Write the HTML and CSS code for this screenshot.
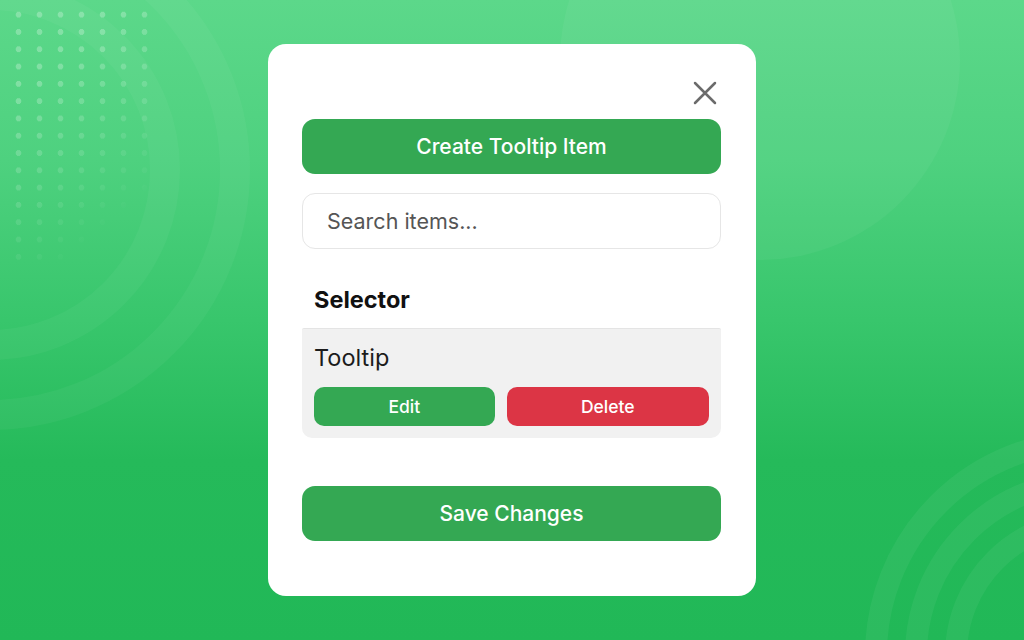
FILE: index.html
```html
<!DOCTYPE html>
<html lang="en">
<head>
<meta charset="utf-8">
<title>Tooltip Items</title>
<link rel="stylesheet" href="styles.css">
</head>
<body>
<div class="bg">
  <div class="dots"></div>
  <div class="ring-set left">
    <span class="ring r1"></span>
    <span class="ring r2"></span>
  </div>
  <div class="blob"></div>
  <div class="ring-set right">
    <span class="ring r3"></span>
    <span class="ring r4"></span>
    <span class="ring r5"></span>
  </div>
</div>
<main class="stage">
  <section class="modal">
    <div class="modal-head">
      <button class="close" aria-label="Close">
        <svg width="24" height="24" viewBox="0 0 24 24" fill="none" stroke="#6b6b6b" stroke-width="2.5" stroke-linecap="round">
          <path d="M2 2 L22 22 M22 2 L2 22"/>
        </svg>
      </button>
    </div>
    <button class="btn btn-primary btn-lg">Create Tooltip Item</button>
    <div class="search">Search items...</div>
    <h2 class="group-title">Selector</h2>
    <div class="item">
      <div class="item-name">Tooltip</div>
      <div class="item-actions">
        <button class="btn btn-primary btn-sm">Edit</button>
        <button class="btn btn-danger btn-sm">Delete</button>
      </div>
    </div>
    <button class="btn btn-primary btn-lg save">Save Changes</button>
  </section>
</main>
</body>
</html>
```
FILE: styles.css
```css
* { box-sizing: border-box; }
html, body { margin: 0; height: 100%; }
body {
  width: 1024px;
  height: 640px;
  overflow: hidden;
  font-family: Inter, "Liberation Sans", sans-serif;
  background: linear-gradient(180deg, #5cd88a 0%, #4ed17f 25%, #38c66c 50%, #25ba5a 72%, #21b857 100%);
  position: relative;
}
.bg { position: absolute; inset: 0; overflow: hidden; }
.dots {
  position: absolute;
  left: 8px; top: 6px;
  width: 150px; height: 265px;
  background-image: radial-gradient(circle, rgba(255,255,255,0.26) 2.6px, transparent 3.2px);
  background-size: 21px 17.3px;
  -webkit-mask-image: linear-gradient(140deg, #000 25%, transparent 80%);
  mask-image: linear-gradient(140deg, #000 25%, transparent 80%);
}
.ring-set { position: absolute; width: 0; height: 0; }
.ring-set.left { left: -10px; top: 170px; }
.ring-set.right { left: 1090px; top: 655px; }
.ring {
  position: absolute;
  border-radius: 50%;
  border: 22px solid rgba(255,255,255,0.05);
  transform: translate(-50%, -50%);
}
.r1 { width: 380px; height: 380px; border-width: 30px; border-color: rgba(255,255,255,0.04); }
.r2 { width: 520px; height: 520px; border-width: 30px; border-color: rgba(255,255,255,0.04); }
.r3 { width: 450px; height: 450px; }
.r4 { width: 370px; height: 370px; }
.r5 { width: 290px; height: 290px; }
.blob {
  position: absolute;
  left: 560px; top: -140px;
  width: 400px; height: 400px;
  border-radius: 50%;
  background: rgba(255,255,255,0.045);
}
.stage {
  position: relative;
  display: flex;
  justify-content: center;
  padding-top: 44px;
}
.modal {
  width: 488px;
  background: #fff;
  border-radius: 18px;
  padding: 37px 35px 55px 34px;
  display: flex;
  flex-direction: column;
}
.modal-head {
  display: flex;
  justify-content: flex-end;
  height: 24px;
  margin-bottom: 14px;
  padding-right: 4px;
}
.close {
  border: 0; background: none; padding: 0; margin: 0;
  width: 24px; height: 24px; display: block;
}
.close svg { display: block; }
.btn {
  border: 0;
  font-family: inherit;
  color: #fff;
  cursor: pointer;
  display: flex;
  align-items: center;
  justify-content: center;
}
.btn-primary { background: #34a853; }
.btn-danger { background: #dc3545; }
.btn-lg {
  height: 55px;
  border-radius: 13px;
  font-size: 21px;
  font-weight: 500;
}
.search {
  margin-top: 19px;
  height: 56px;
  border: 1px solid #e6e6e6;
  border-radius: 13px;
  padding-left: 24px;
  display: flex;
  align-items: center;
  font-size: 21.5px;
  color: #555;
}
.group-title {
  margin: 36px 0 13px 12px;
  font-size: 23.5px;
  line-height: 30px;
  font-weight: 700;
  color: #111;
}
.item {
  background: #f1f1f1;
  border-top: 1px solid #e4e4e4;
  border-radius: 2px 2px 10px 10px;
  padding: 14px 12px 12px 12px;
}
.item-name {
  font-size: 23.5px;
  line-height: 30px;
  color: #1c1c1c;
  font-weight: 400;
}
.item-actions {
  margin-top: 14px;
  display: flex;
  gap: 12px;
}
.btn-sm {
  flex: 1 1 auto;
  height: 39px;
  border-radius: 10px;
  font-size: 17.5px;
  font-weight: 500;
}
.save { margin-top: 48px; }
```
